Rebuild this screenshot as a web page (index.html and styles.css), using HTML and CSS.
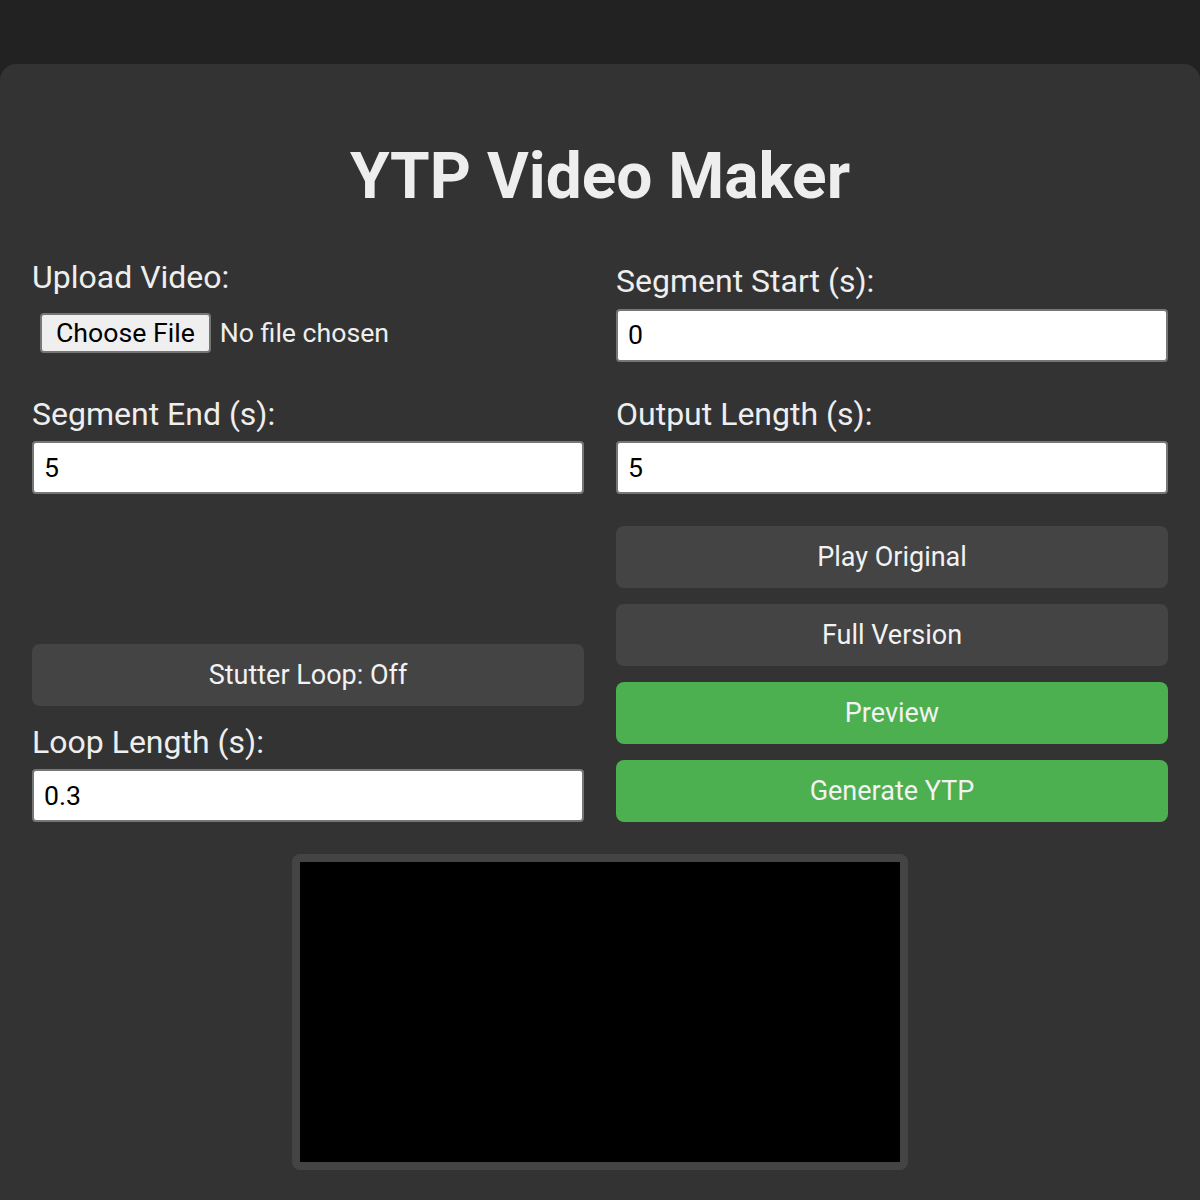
FILE: index.html
```html
<!DOCTYPE html>
<html lang="en">
<head>
<meta charset="utf-8">
<title>YTP Video Maker</title>
<link rel="stylesheet" href="styles.css">
</head>
<body>
<main class="app">
  <h1 class="title">YTP Video Maker</h1>
  <div class="grid">
    <div class="cell">
      <label class="label" for="video">Upload Video:</label>
      <input class="file-input" id="video" type="file" accept="video/*">
    </div>
    <div class="cell">
      <label class="label" for="start">Segment Start (s):</label>
      <input class="text-input" id="start" type="text" value="0">
    </div>
    <div class="cell">
      <label class="label" for="end">Segment End (s):</label>
      <input class="text-input" id="end" type="text" value="5">
    </div>
    <div class="cell">
      <label class="label" for="outlen">Output Length (s):</label>
      <input class="text-input" id="outlen" type="text" value="5">
    </div>
    <div class="cell">
      <button class="btn btn-stutter" type="button">Stutter Loop: Off</button>
      <label class="label" for="looplen">Loop Length (s):</label>
      <input class="text-input" id="looplen" type="text" value="0.3">
    </div>
    <div class="cell btn-stack">
      <button class="btn" type="button">Play Original</button>
      <button class="btn" type="button">Full Version</button>
      <button class="btn btn-green" type="button">Preview</button>
      <button class="btn btn-green" type="button">Generate YTP</button>
    </div>
  </div>
  <div class="screen"></div>
</main>
</body>
</html>
```
FILE: styles.css
```css
html, body {
  margin: 0;
  padding: 0;
  background: #222222;
  font-family: Roboto, "Noto Sans", "Liberation Sans", sans-serif;
}

.app {
  margin-top: 64px;
  background: #333333;
  border-radius: 16px 16px 0 0;
  padding: 32px 32px 40px;
  min-height: 1100px;
  box-sizing: border-box;
}

.title {
  margin: 43px 0 43px;
  font-size: 64px;
  font-weight: 700;
  line-height: 75px;
  text-align: center;
  color: #eeeeee;
}

.grid {
  display: grid;
  grid-template-columns: 1fr 1fr;
  gap: 32px;
  align-items: end;
}

.cell {
  display: flex;
  flex-direction: column;
  align-items: stretch;
}

.label {
  display: block;
  font-size: 32px;
  line-height: 37.5px;
  color: #eeeeee;
  padding-top: 2px;
  margin-bottom: 8px;
}

.text-input {
  box-sizing: border-box;
  width: 100%;
  height: 53px;
  padding: 0 10px;
  border: 2px solid #767676;
  border-radius: 4px;
  background: #ffffff;
  color: #000000;
  font-family: Roboto, "Noto Sans", sans-serif;
  font-size: 26.67px;
}

.file-input {
  box-sizing: border-box;
  padding: 8px 8px 9px;
  height: 57px;
  border: none;
  background: transparent;
  color: #eeeeee;
  font-family: Roboto, "Noto Sans", sans-serif;
  font-size: 26.67px;
}

.file-input::file-selector-button {
  height: 40px;
  margin-right: 9px;
  padding: 0 14px;
  border: 2px solid #767676;
  border-radius: 4px;
  background: #efefef;
  color: #000000;
  font-family: Roboto, "Noto Sans", sans-serif;
  font-size: 26.67px;
}

.btn {
  box-sizing: border-box;
  height: 62px;
  width: 100%;
  border: none;
  border-radius: 8px;
  background: #444444;
  color: #f2f2f2;
  font-family: Roboto, "Noto Sans", sans-serif;
  font-size: 27px;
  cursor: pointer;
}

.btn-green {
  background: #4caf50;
}

.btn-stutter {
  margin-bottom: 16px;
}

.btn-stack {
  gap: 16px;
}

.screen {
  width: 600px;
  height: 300px;
  margin: 32px auto 0;
  background: #000000;
  border: 8px solid #444444;
  border-radius: 8px;
}
```
